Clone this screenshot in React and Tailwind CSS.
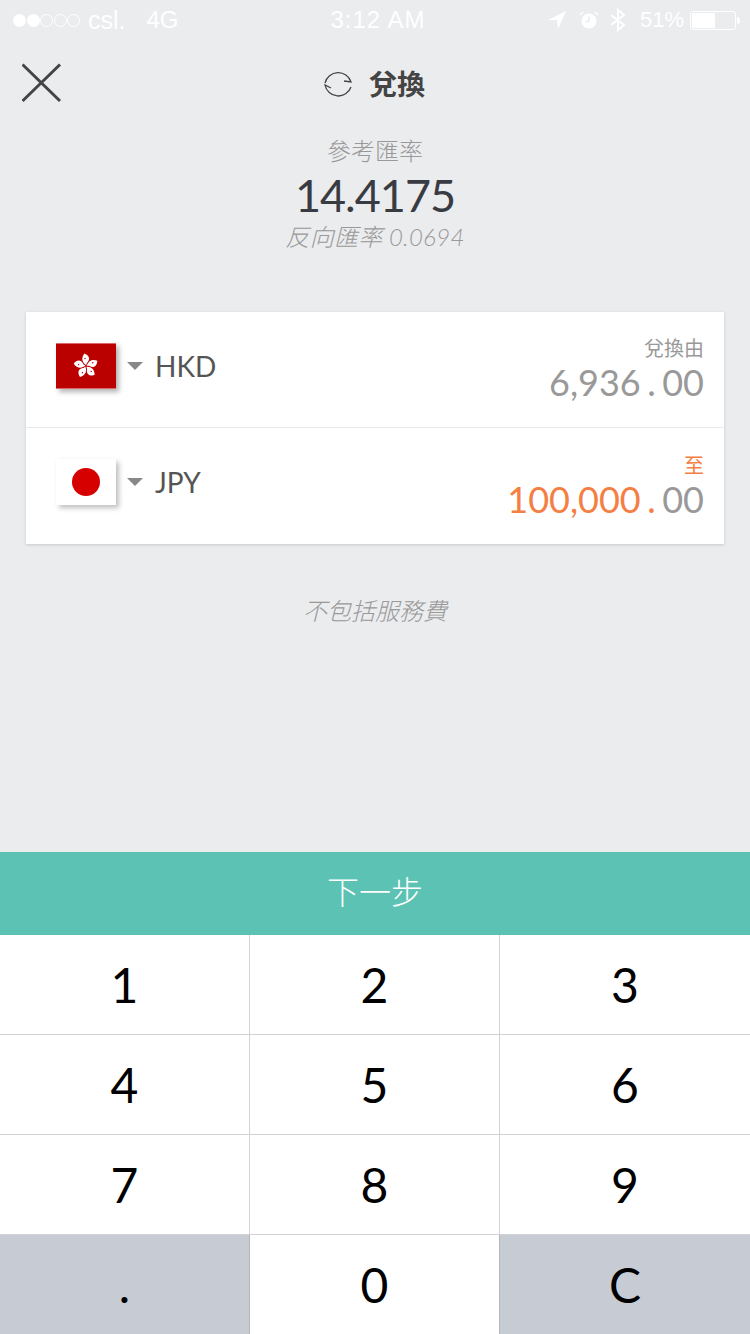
import React from 'react';

const LATO = "font-['Lato','Noto_Sans_CJK_TC',sans-serif]";
const KEYS = ['1', '2', '3', '4', '5', '6', '7', '8', '9'];

function StatusBar() {
  return (
    <div className="flex h-10 items-center justify-between pl-[13px] pr-[10px] font-['Liberation_Sans',sans-serif] text-[22px] leading-none text-white">
      <div className="flex w-[250px] items-center">
        <div className="flex items-center gap-[0.5px]">
          {[1, 1, 0, 0, 0].map((on, i) => (
            <span
              key={i}
              className={on ? 'h-[13px] w-[13px] rounded-full bg-white' : 'h-[13px] w-[13px] rounded-full border border-white'}
            />
          ))}
        </div>
        <span className="ml-[8px] text-[25px]">csl.</span>
        <span className="ml-[21px] text-[24px]">4G</span>
      </div>
      <span className="ml-[3px] text-[24px] tracking-[1px]">3:12 AM</span>
      <div className="flex w-[250px] items-center justify-end">
        <svg width="18" height="18" viewBox="0 0 18 18" fill="white">
          <path d="M0 9 L18 0 L10 18 L9 9 Z" />
        </svg>
        <svg className="ml-[13px]" width="20" height="20" viewBox="0 0 20 20">
          <circle cx="10" cy="11" r="7.5" fill="white" />
          <path d="M10 6.5V11.5H6.5" fill="none" stroke="#ebecee" strokeWidth="1.5" />
          <path d="M1 5 L4 2 M19 5 L16 2" stroke="white" strokeWidth="1.5" />
        </svg>
        <svg className="ml-[11px]" width="16" height="24" viewBox="0 0 16 24" fill="none" stroke="white" strokeWidth="2">
          <path d="M1 7 L14 17 L8 22 V2 L14 7 L1 17" />
        </svg>
        <span className="ml-[14px]">51%</span>
        <div className="ml-[6px] h-[19px] w-[46px] rounded-[3px] border border-white p-[1px]">
          <div className="h-full w-[23px] rounded-[1px] bg-white" />
        </div>
        <div className="ml-[1px] h-[7px] w-[3px] rounded-r-sm bg-white" />
      </div>
    </div>
  );
}

function HongKongFlag() {
  return (
    <div className="flex h-[46px] w-[60px] items-center justify-center border-y border-[#d96a6a] bg-[#bb0000] shadow-[3px_3px_5px_rgba(0,0,0,0.3)]">
      <svg width="26" height="26" viewBox="-13 -13 26 26">
        {[0, 72, 144, 216, 288].map((deg) => (
          <g key={deg} transform={`rotate(${deg})`}>
            <path fill="white" d="M0.3 -0.8 C-3.6 -3 -5.4 -7.6 -1.6 -12.4 C2.6 -11 5 -7 1.4 -3.6 C0.6 -2.8 0.3 -1.8 0.3 -0.8 Z" />
            <circle cx="-1" cy="-7.5" r="0.7" fill="#bb0000" />
          </g>
        ))}
      </svg>
    </div>
  );
}

function JapanFlag() {
  return (
    <div className="flex h-[46px] w-[60px] items-center justify-center bg-white shadow-[3px_3px_5px_rgba(0,0,0,0.25)]">
      <div className="h-7 w-7 rounded-full bg-[#d60000]" />
    </div>
  );
}

function CurrencyRow({ flag, code, label, labelColor, whole, wholeColor, border }) {
  return (
    <div className={`flex h-[116px] items-center justify-between pl-[30px] pr-5 ${border ? 'border-b border-[#e9e9ea]' : ''}`}>
      <div className="mb-[8px] flex items-center">
        {flag}
        <div className="ml-[11px] h-0 w-0 border-x-[8px] border-t-[8px] border-x-transparent border-t-[#888888]" />
        <span className="ml-[12px] text-[28px] leading-none text-[#555555]">{code}</span>
      </div>
      <div className="flex flex-col items-end">
        <span className={`text-[20px] leading-[24px] ${labelColor}`}>{label}</span>
        <div className="mt-[1px] flex text-[36px] leading-[42px] text-[#999999]">
          <span className={wholeColor}>{whole}</span>
          <span className={`mx-[6.5px] ${wholeColor}`}>.</span>
          <span>00</span>
        </div>
      </div>
    </div>
  );
}

export default function App() {
  return (
    <div className={`flex h-[1334px] w-[750px] flex-col overflow-hidden bg-[#ebecee] ${LATO}`}>
      <StatusBar />

      <div className="relative flex h-[90px] items-center justify-center">
        <svg className="absolute left-[22px] top-[23px]" width="40" height="40" viewBox="0 0 40 40" stroke="#444444" strokeWidth="3">
          <path d="M0.5 1.5 L38 38 M38 1.5 L0.5 38" />
        </svg>
        <svg width="30" height="30" viewBox="0 0 30 30" fill="none" stroke="#444444" strokeWidth="1.3">
          <path d="M2 13 A13.5 13.5 0 0 1 28 12 L21 11" />
          <path d="M28 17 A13.5 13.5 0 0 1 2 15 L8 18" />
        </svg>
        <span className="mb-[2px] ml-[16px] mr-[2px] text-[28px] font-bold leading-none text-[#444444]">兌換</span>
      </div>

      <div className="mt-[5px] flex flex-col items-center">
        <span className="text-[24px] font-light leading-[32px] text-[#999999]">參考匯率</span>
        <span className="text-[45px] leading-[56px] tracking-[-1px] text-[#383c42]">14.4175</span>
        <span className="text-[24px] font-light italic leading-[28px] tracking-[0.3px] text-[#999999]">反向匯率 0.0694</span>
      </div>

      <div className="mx-[26px] mt-[61px] bg-white shadow-[0_1px_3px_rgba(0,0,0,0.15)]">
        <CurrencyRow flag={<HongKongFlag />} code="HKD" label="兌換由" labelColor="text-[#999999]" whole="6,936" wholeColor="text-[#999999]" border />
        <CurrencyRow flag={<JapanFlag />} code="JPY" label="至" labelColor="text-[#f57e42]" whole="100,000" wholeColor="text-[#f57e42]" />
      </div>

      <div className="mt-[53px] text-center text-[24px] font-light italic leading-[28px] text-[#999999]">不包括服務費</div>

      <div className="mt-auto flex h-[83px] items-center justify-center bg-[#5cc2b4] pb-[3px] text-[32px] font-light leading-none text-white">下一步</div>

      <div className="grid h-[399px] grid-cols-3 bg-white text-[48px] leading-none text-black">
        {KEYS.map((key, i) => (
          <div
            key={key}
            className={`flex h-[100px] items-center justify-center border-b border-[#d3d3d5] ${(i + 1) % 3 ? 'border-r' : ''}`}
          >
            {key}
          </div>
        ))}
        <div className="flex h-[100px] items-center justify-center border-r border-[#b5b5b8] bg-[#c7ccd4]">.</div>
        <div className="flex h-[100px] items-center justify-center border-r border-[#b5b5b8]">0</div>
        <div className="flex h-[100px] items-center justify-center bg-[#c7ccd4]">C</div>
      </div>
    </div>
  );
}
